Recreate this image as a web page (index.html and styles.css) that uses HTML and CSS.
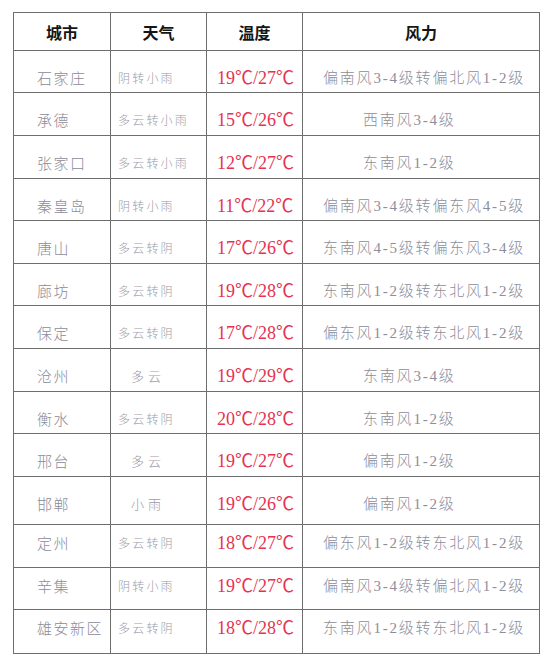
FILE: index.html
```html
<!DOCTYPE html>
<html lang="zh">
<head>
<meta charset="utf-8">
<title>天气</title>
<link rel="stylesheet" href="styles.css">
</head>
<body>
<div class="table">
  <div class="row head">
    <div class="cell">城市</div><div class="cell">天气</div><div class="cell">温度</div><div class="cell">风力</div>
  </div>
  <div class="row h42">
    <div class="cell city">石家庄</div><div class="cell wx">阴转小雨</div><div class="cell temp">19℃/27℃</div><div class="cell wind">偏南风3-4级转偏北风1-2级</div>
  </div>
  <div class="row">
    <div class="cell city">承德</div><div class="cell wx">多云转小雨</div><div class="cell temp">15℃/26℃</div><div class="cell wind short">西南风3-4级</div>
  </div>
  <div class="row">
    <div class="cell city">张家口</div><div class="cell wx">多云转小雨</div><div class="cell temp">12℃/27℃</div><div class="cell wind short">东南风1-2级</div>
  </div>
  <div class="row h42">
    <div class="cell city">秦皇岛</div><div class="cell wx">阴转小雨</div><div class="cell temp">11℃/22℃</div><div class="cell wind">偏南风3-4级转偏东风4-5级</div>
  </div>
  <div class="row">
    <div class="cell city">唐山</div><div class="cell wx">多云转阴</div><div class="cell temp">17℃/26℃</div><div class="cell wind">东南风4-5级转偏东风3-4级</div>
  </div>
  <div class="row h42">
    <div class="cell city">廊坊</div><div class="cell wx">多云转阴</div><div class="cell temp">19℃/28℃</div><div class="cell wind">东南风1-2级转东北风1-2级</div>
  </div>
  <div class="row">
    <div class="cell city">保定</div><div class="cell wx">多云转阴</div><div class="cell temp">17℃/28℃</div><div class="cell wind">偏东风1-2级转东北风1-2级</div>
  </div>
  <div class="row">
    <div class="cell city">沧州</div><div class="cell wx big">多云</div><div class="cell temp">19℃/29℃</div><div class="cell wind short">东南风3-4级</div>
  </div>
  <div class="row h42">
    <div class="cell city">衡水</div><div class="cell wx">多云转阴</div><div class="cell temp">20℃/28℃</div><div class="cell wind short">东南风1-2级</div>
  </div>
  <div class="row">
    <div class="cell city">邢台</div><div class="cell wx big">多云</div><div class="cell temp">19℃/27℃</div><div class="cell wind short">偏南风1-2级</div>
  </div>
  <div class="row h48">
    <div class="cell city">邯郸</div><div class="cell wx big">小雨</div><div class="cell temp">19℃/26℃</div><div class="cell wind short">偏南风1-2级</div>
  </div>
  <div class="row hi">
    <div class="cell city">定州</div><div class="cell wx">多云转阴</div><div class="cell temp">18℃/27℃</div><div class="cell wind">偏东风1-2级转东北风1-2级</div>
  </div>
  <div class="row hi h42">
    <div class="cell city">辛集</div><div class="cell wx">阴转小雨</div><div class="cell temp">19℃/27℃</div><div class="cell wind">偏南风3-4级转偏北风1-2级</div>
  </div>
  <div class="row hi h44">
    <div class="cell city">雄安新区</div><div class="cell wx">多云转阴</div><div class="cell temp">18℃/28℃</div><div class="cell wind">东南风1-2级转东北风1-2级</div>
  </div>
</div>
</body>
</html>
```

FILE: styles.css
```css
html, body {
  margin: 0;
  padding: 0;
  background: #ffffff;
}
body {
  font-family: "Noto Sans CJK SC", "Noto Sans", sans-serif;
}
.table {
  margin: 12px 0 0 13px;
  width: 527px;
  box-sizing: border-box;
  border-left: 1px solid #6e6e6e;
  border-top: 1px solid #6e6e6e;
}
.row {
  display: grid;
  grid-template-columns: 97px 96px 96px 237px;
  height: 43px;
}
.row.h42 { height: 42px; }
.row.h44 { height: 44px; }
.row.h48 { height: 48px; }
.row.head { height: 38px; }
.cell {
  box-sizing: border-box;
  border-right: 1px solid #6e6e6e;
  border-bottom: 1px solid #6e6e6e;
  display: flex;
  align-items: flex-start;
  padding-top: 17px;
  white-space: nowrap;
  line-height: 20px;
}
.row.hi .cell { padding-top: 8px; }
.head .cell {
  padding-top: 0;
  align-items: center;
  justify-content: center;
  font-weight: 700;
  font-size: 16px;
  color: #151515;
}
.city {
  padding-left: 23px;
  font-size: 15px;
  letter-spacing: 1.5px;
  color: #8b8b98;
  font-weight: 300;
}
.wx {
  padding-left: 7px;
  font-size: 12px;
  letter-spacing: 2.2px;
  color: #9c9ca8;
  font-weight: 300;
}
.wx.big {
  padding-left: 20px;
  font-size: 13px;
  letter-spacing: 4px;
}
.temp {
  padding-left: 10px;
  font-family: "Liberation Serif", "Noto Sans CJK SC", serif;
  font-size: 18px;
  color: #e5334f;
}
.wind {
  padding-left: 20px;
  font-family: "Liberation Serif", "Noto Sans CJK SC", serif;
  font-size: 15px;
  letter-spacing: 1.8px;
  color: #8d8d99;
  font-weight: 300;
}
.wind.short { padding-left: 60px; }
```
